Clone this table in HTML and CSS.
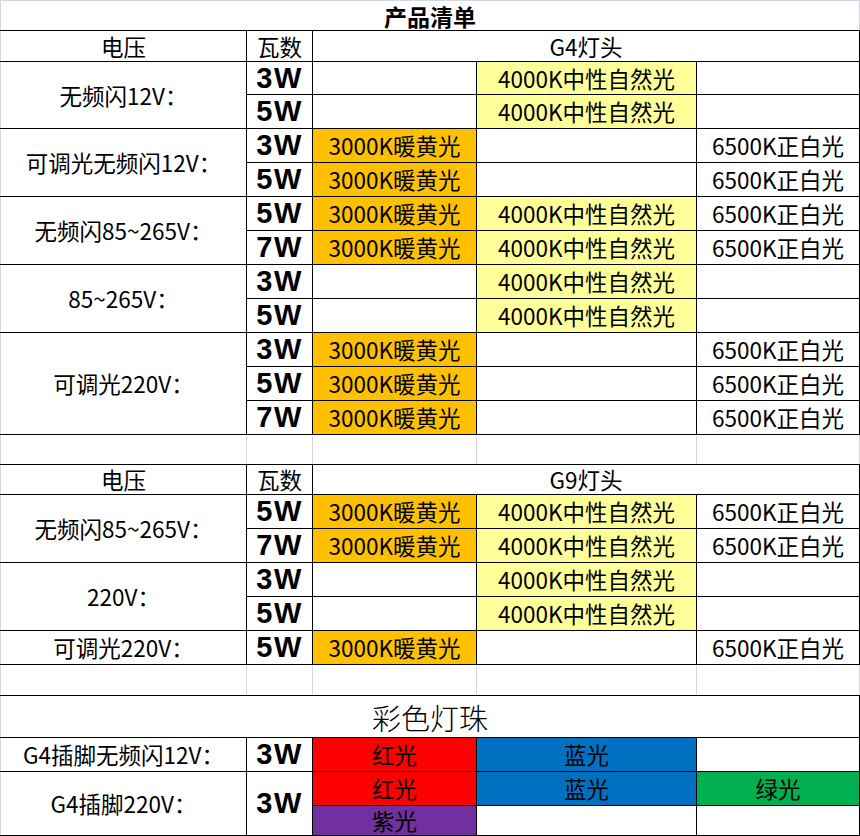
FILE: index.html
```html
<!DOCTYPE html>
<html lang="zh-CN">
<head>
<meta charset="utf-8">
<title>产品清单</title>
<link rel="stylesheet" href="styles.css">
</head>
<body>
<table class="sheet">
  <colgroup>
    <col class="c1"><col class="c2"><col class="c3"><col class="c4"><col class="c5">
  </colgroup>
  <tr class="h30"><td colspan="5" class="title">产品清单</td></tr>
  <tr class="h31"><td class="first">电压</td><td>瓦数</td><td colspan="3" class="last">G4灯头</td></tr>

  <tr class="h33"><td rowspan="2" class="first">无频闪12V：</td><td class="w">3W</td><td></td><td class="y">4000K中性自然光</td><td class="last"></td></tr>
  <tr class="h34"><td class="w">5W</td><td></td><td class="y">4000K中性自然光</td><td class="last"></td></tr>

  <tr class="h34"><td rowspan="2" class="first">可调光无频闪12V：</td><td class="w">3W</td><td class="o">3000K暖黄光</td><td></td><td class="last">6500K正白光</td></tr>
  <tr class="h34"><td class="w">5W</td><td class="o">3000K暖黄光</td><td></td><td class="last">6500K正白光</td></tr>

  <tr class="h34"><td rowspan="2" class="first">无频闪85~265V：</td><td class="w">5W</td><td class="o">3000K暖黄光</td><td class="y">4000K中性自然光</td><td class="last">6500K正白光</td></tr>
  <tr class="h34"><td class="w">7W</td><td class="o">3000K暖黄光</td><td class="y">4000K中性自然光</td><td class="last">6500K正白光</td></tr>

  <tr class="h34"><td rowspan="2" class="first">85~265V：</td><td class="w">3W</td><td></td><td class="y">4000K中性自然光</td><td class="last"></td></tr>
  <tr class="h34"><td class="w">5W</td><td></td><td class="y">4000K中性自然光</td><td class="last"></td></tr>

  <tr class="h34"><td rowspan="3" class="first">可调光220V：</td><td class="w">3W</td><td class="o">3000K暖黄光</td><td></td><td class="last">6500K正白光</td></tr>
  <tr class="h34"><td class="w">5W</td><td class="o">3000K暖黄光</td><td></td><td class="last">6500K正白光</td></tr>
  <tr class="h34"><td class="w">7W</td><td class="o">3000K暖黄光</td><td></td><td class="last">6500K正白光</td></tr>

  <tr class="h30 gap"><td class="first"></td><td></td><td></td><td></td><td></td></tr>

  <tr class="h30"><td class="first">电压</td><td>瓦数</td><td colspan="3" class="last">G9灯头</td></tr>

  <tr class="h34"><td rowspan="2" class="first">无频闪85~265V：</td><td class="w">5W</td><td class="o">3000K暖黄光</td><td class="y">4000K中性自然光</td><td class="last">6500K正白光</td></tr>
  <tr class="h34"><td class="w">7W</td><td class="o">3000K暖黄光</td><td class="y">4000K中性自然光</td><td class="last">6500K正白光</td></tr>

  <tr class="h34"><td rowspan="2" class="first">220V：</td><td class="w">3W</td><td></td><td class="y">4000K中性自然光</td><td class="last"></td></tr>
  <tr class="h34"><td class="w">5W</td><td></td><td class="y">4000K中性自然光</td><td class="last"></td></tr>

  <tr class="h34"><td class="first">可调光220V：</td><td class="w">5W</td><td class="o">3000K暖黄光</td><td></td><td class="last">6500K正白光</td></tr>

  <tr class="h31 gap"><td class="first"></td><td></td><td></td><td></td><td></td></tr>

  <tr class="h42"><td colspan="5" class="first last color-title">彩色灯珠</td></tr>

  <tr class="h34"><td class="first">G4插脚无频闪12V：</td><td class="w">3W</td><td class="r">红光</td><td class="b">蓝光</td><td class="last"></td></tr>
  <tr class="h34"><td rowspan="2" class="first">G4插脚220V：</td><td rowspan="2" class="w">3W</td><td class="r">红光</td><td class="b">蓝光</td><td class="g last">绿光</td></tr>
  <tr class="h30"><td class="p">紫光</td><td></td><td class="last"></td></tr>
</table>
</body>
</html>
```

FILE: styles.css
```css
html, body {
  margin: 0;
  padding: 0;
  background: #ffffff;
}

.sheet {
  border-collapse: collapse;
  table-layout: fixed;
  width: 859px;
  font-family: "Noto Sans CJK SC", "Noto Sans", sans-serif;
  font-size: 22.5px;
  color: #000000;
}

.c1 { width: 246px; }
.c2 { width: 66px; }
.c3 { width: 164px; }
.c4 { width: 220px; }
.c5 { width: 163px; }

.sheet td {
  border: 1px solid #000000;
  padding: 0;
  text-align: center;
  vertical-align: middle;
  line-height: 1;
  white-space: nowrap;
}

.h30 { height: 30px; }
.h31 { height: 31px; }
.h33 { height: 33px; }
.h34 { height: 34px; }
.h42 { height: 42px; }

.sheet td.first { border-left-color: #d0d7e5; }

.sheet td.title {
  border-top-color: #d0d7e5;
  border-left-color: #d0d7e5;
  border-right-color: #d0d7e5;
  font-weight: 700;
  font-size: 23px;
  padding-top: 2px;
}

.gap td {
  border-left-color: #d0d7e5;
  border-right-color: #d0d7e5;
}

.sheet td.color-title {
  font-size: 29px;
  font-weight: 300;
  padding-top: 2px;
}

.sheet td.w {
  font-family: "Liberation Sans", Arial, sans-serif;
  font-weight: 700;
  font-size: 29px;
  letter-spacing: 1.5px;
}

.o { background: #ffc000; }
.y { background: #ffff99; }
.r { background: #ff0000; }
.b { background: #0070c0; }
.g { background: #00b050; }
.p { background: #7030a0; }
```
